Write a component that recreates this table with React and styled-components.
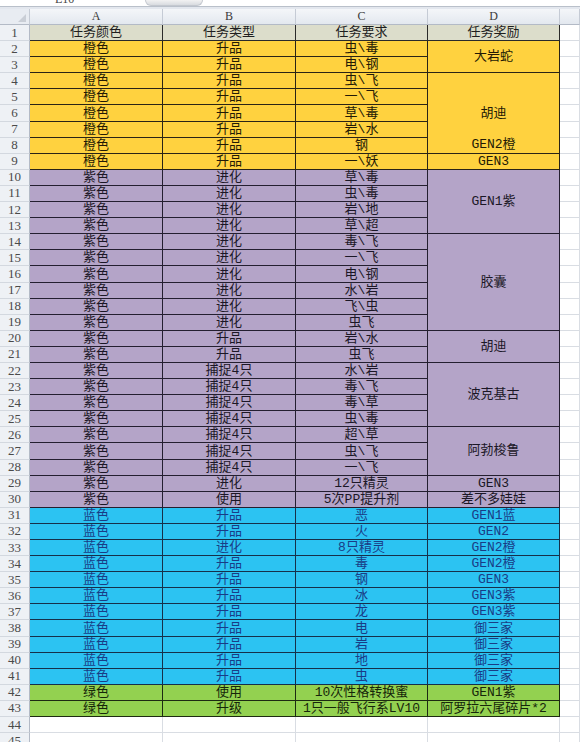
import React from 'react';
import styled, { createGlobalStyle } from 'styled-components';

const GlobalStyle = createGlobalStyle`
  html, body {
    margin: 0;
    padding: 0;
    background: #ffffff;
    overflow: hidden;
  }
  body {
    font-family: "Liberation Mono", "Noto Sans CJK SC", monospace;
  }
`;

const tones = {
  head: { bg: '#dcddcb', fg: '#1e1e1e', line: '#2a2a2a' },
  orange: { bg: '#ffd23f', fg: '#231a05', line: '#2a2416' },
  purple: { bg: '#b4a4c8', fg: '#1b1726', line: '#241f30' },
  blue: { bg: '#2cc3f2', fg: '#1a3c86', line: '#16304a' },
  green: { bg: '#93d150', fg: '#16260a', line: '#1d2a12' },
  blank: { bg: '#ffffff', fg: '#222', line: '#d9dde3' },
};

const rows = [
  ['orange', '橙色', '升品', '虫\\毒'],
  ['orange', '橙色', '升品', '电\\钢'],
  ['orange', '橙色', '升品', '虫\\飞'],
  ['orange', '橙色', '升品', '一\\飞'],
  ['orange', '橙色', '升品', '草\\毒'],
  ['orange', '橙色', '升品', '岩\\水'],
  ['orange', '橙色', '升品', '钢'],
  ['orange', '橙色', '升品', '一\\妖'],
  ['purple', '紫色', '进化', '草\\毒'],
  ['purple', '紫色', '进化', '虫\\毒'],
  ['purple', '紫色', '进化', '岩\\地'],
  ['purple', '紫色', '进化', '草\\超'],
  ['purple', '紫色', '进化', '毒\\飞'],
  ['purple', '紫色', '进化', '一\\飞'],
  ['purple', '紫色', '进化', '电\\钢'],
  ['purple', '紫色', '进化', '水\\岩'],
  ['purple', '紫色', '进化', '飞\\虫'],
  ['purple', '紫色', '进化', '虫飞'],
  ['purple', '紫色', '升品', '岩\\水'],
  ['purple', '紫色', '升品', '虫飞'],
  ['purple', '紫色', '捕捉4只', '水\\岩'],
  ['purple', '紫色', '捕捉4只', '毒\\飞'],
  ['purple', '紫色', '捕捉4只', '毒\\草'],
  ['purple', '紫色', '捕捉4只', '虫\\毒'],
  ['purple', '紫色', '捕捉4只', '超\\草'],
  ['purple', '紫色', '捕捉4只', '虫\\飞'],
  ['purple', '紫色', '捕捉4只', '一\\飞'],
  ['purple', '紫色', '进化', '12只精灵'],
  ['purple', '紫色', '使用', '5次PP提升剂'],
  ['blue', '蓝色', '升品', '恶'],
  ['blue', '蓝色', '升品', '火'],
  ['blue', '蓝色', '进化', '8只精灵'],
  ['blue', '蓝色', '升品', '毒'],
  ['blue', '蓝色', '升品', '钢'],
  ['blue', '蓝色', '升品', '冰'],
  ['blue', '蓝色', '升品', '龙'],
  ['blue', '蓝色', '升品', '电'],
  ['blue', '蓝色', '升品', '岩'],
  ['blue', '蓝色', '升品', '地'],
  ['blue', '蓝色', '升品', '虫'],
  ['green', '绿色', '使用', '10次性格转换蜜'],
  ['green', '绿色', '升级', '1只一般飞行系LV10'],
];

// column D rewards: start row, span, lines (row offset inside the merge)
const rewards = [
  { start: 2, span: 2, tone: 'orange', text: '大岩蛇' },
  { start: 4, span: 5, tone: 'orange', lines: [{ at: 3, text: '胡迪' }, { at: 5, text: 'GEN2橙' }] },
  { start: 9, span: 1, tone: 'orange', text: 'GEN3' },
  { start: 10, span: 4, tone: 'purple', text: 'GEN1紫' },
  { start: 14, span: 6, tone: 'purple', text: '胶囊' },
  { start: 20, span: 2, tone: 'purple', text: '胡迪' },
  { start: 22, span: 4, tone: 'purple', text: '波克基古' },
  { start: 26, span: 3, tone: 'purple', text: '阿勃梭鲁' },
  { start: 29, span: 1, tone: 'purple', text: 'GEN3' },
  { start: 30, span: 1, tone: 'purple', text: '差不多娃娃' },
  { start: 31, span: 1, tone: 'blue', text: 'GEN1蓝' },
  { start: 32, span: 1, tone: 'blue', text: 'GEN2' },
  { start: 33, span: 1, tone: 'blue', text: 'GEN2橙' },
  { start: 34, span: 1, tone: 'blue', text: 'GEN2橙' },
  { start: 35, span: 1, tone: 'blue', text: 'GEN3' },
  { start: 36, span: 1, tone: 'blue', text: 'GEN3紫' },
  { start: 37, span: 1, tone: 'blue', text: 'GEN3紫' },
  { start: 38, span: 1, tone: 'blue', text: '御三家' },
  { start: 39, span: 1, tone: 'blue', text: '御三家' },
  { start: 40, span: 1, tone: 'blue', text: '御三家' },
  { start: 41, span: 1, tone: 'blue', text: '御三家' },
  { start: 42, span: 1, tone: 'green', text: 'GEN1紫' },
  { start: 43, span: 1, tone: 'green', text: '阿罗拉六尾碎片*2' },
];

const TOTAL_ROWS = 45;

export default function App() {
  const body = [];

  for (let r = 1; r <= TOTAL_ROWS; r += 1) {
    const gr = r + 1;
    body.push(
      <RowNumber key={`n${r}`} $row={gr}>
        {r}
      </RowNumber>,
    );

    if (r === 1) {
      ['任务颜色', '任务类型', '任务要求', '任务奖励'].forEach((t, i) => {
        body.push(
          <Cell key={`h${i}`} $row={gr} $col={i + 2} $tone="head">
            {t}
          </Cell>,
        );
      });
    } else if (r <= 43) {
      const [tone, a, b, c] = rows[r - 2];
      [a, b, c].forEach((t, i) => {
        body.push(
          <Cell key={`c${r}-${i}`} $row={gr} $col={i + 2} $tone={tone}>
            {t}
          </Cell>,
        );
      });
    } else {
      [2, 3, 4, 5].forEach((col) => {
        body.push(<Cell key={`b${r}-${col}`} $row={gr} $col={col} $tone="blank" />);
      });
    }

    body.push(<Cell key={`e${r}`} $row={gr} $col={6} $tone="blank" />);
  }

  rewards.forEach((rw) => {
    body.push(
      <Merged key={`d${rw.start}`} $row={rw.start + 1} $span={rw.span} $tone={rw.tone}>
        {rw.lines ? (
          rw.lines.map((l) => (
            <MergedLine key={l.at} $at={l.at}>
              {l.text}
            </MergedLine>
          ))
        ) : (
          <MergedLine $at={1} $full>
            {rw.text}
          </MergedLine>
        )}
      </Merged>,
    );
  });

  return (
    <>
      <GlobalStyle />
      <Page>
        <FormulaBar>
          <NameBox>E10</NameBox>
          <FxTab />
        </FormulaBar>
        <Strip />
        <Sheet>
          <Corner>
            <svg width="8" height="8" viewBox="0 0 8 8">
              <path d="M8 0 L8 8 L0 8 Z" fill="#c9ced6" />
            </svg>
          </Corner>
          {['A', 'B', 'C', 'D', ''].map((l, i) => (
            <ColumnLetter key={l || 'E'} $col={i + 2}>
              {l}
            </ColumnLetter>
          ))}
          {body}
        </Sheet>
      </Page>
    </>
  );
}

const Page = styled.div`
  width: 580px;
  height: 742px;
  overflow: hidden;
  background: #ffffff;
`;

const FormulaBar = styled.div`
  height: 6px;
  display: flex;
  align-items: flex-end;
  border-bottom: 1px solid #b9c0ca;
  overflow: hidden;
`;

const NameBox = styled.div`
  width: 145px;
  padding-left: 55px;
  box-sizing: border-box;
  font-family: "Liberation Serif", serif;
  font-size: 12px;
  line-height: 12px;
  height: 6px;
  overflow: hidden;
  display: flex;
  align-items: flex-end;
  color: #444;
  transform: translateY(-1px);
`;

const FxTab = styled.div`
  width: 58px;
  height: 6px;
  border-radius: 0 0 6px 6px;
  background: linear-gradient(#f2f2f2, #d8dbe0);
  border: 1px solid #c4c8cf;
  border-top: none;
  box-sizing: border-box;
`;

const Strip = styled.div`
  height: 2px;
  background: #e3e7ee;
`;

const Sheet = styled.div`
  display: grid;
  grid-template-columns: 30px 133px 133px 132px 132px 20px;
  grid-template-rows: 16px repeat(${TOTAL_ROWS}, 16.1px);
`;

const Corner = styled.div`
  grid-row: 1;
  grid-column: 1;
  background: #e8ecf2;
  border-right: 1px solid #c5cbd5;
  border-bottom: 1px solid #b3bac6;
  box-sizing: border-box;
  display: flex;
  align-items: flex-end;
  justify-content: flex-end;
  padding: 0 3px 2px 0;
`;

const ColumnLetter = styled.div`
  grid-row: 1;
  grid-column: ${(p) => p.$col};
  background: linear-gradient(#f4f6f9, #e3e8ef);
  border-right: 1px solid #c5cbd5;
  border-bottom: 1px solid #b3bac6;
  box-sizing: border-box;
  display: flex;
  align-items: center;
  justify-content: center;
  font-family: "Liberation Serif", serif;
  font-size: 12px;
  color: #3a3a3a;
`;

const RowNumber = styled.div`
  grid-row: ${(p) => p.$row};
  grid-column: 1;
  background: #eef1f5;
  border-right: 1px solid #b3bac6;
  border-bottom: 1px solid #d3d8df;
  box-sizing: border-box;
  display: flex;
  align-items: center;
  justify-content: center;
  font-family: "Liberation Serif", serif;
  font-size: 13px;
  color: #4a4a4a;
`;

const Cell = styled.div`
  grid-row: ${(p) => p.$row};
  grid-column: ${(p) => p.$col};
  background: ${(p) => tones[p.$tone].bg};
  color: ${(p) => tones[p.$tone].fg};
  border-right: 1px solid ${(p) => tones[p.$tone].line};
  border-bottom: 1px solid ${(p) => tones[p.$tone].line};
  box-sizing: border-box;
  display: flex;
  align-items: flex-end;
  justify-content: center;
  font-size: 13px;
  line-height: 15px;
  white-space: nowrap;
  overflow: hidden;
`;

const Merged = styled.div`
  grid-row: ${(p) => p.$row} / span ${(p) => p.$span};
  grid-column: 5;
  background: ${(p) => tones[p.$tone].bg};
  color: ${(p) => tones[p.$tone].fg};
  border-right: 1px solid ${(p) => tones[p.$tone].line};
  border-bottom: 1px solid ${(p) => tones[p.$tone].line};
  box-sizing: border-box;
  display: grid;
  grid-template-rows: repeat(${(p) => p.$span}, 1fr);
  font-size: 13px;
  line-height: 15px;
  white-space: nowrap;
  overflow: hidden;
`;

const MergedLine = styled.div`
  grid-row: ${(p) => (p.$full ? '1 / -1' : p.$at)};
  display: flex;
  align-items: center;
  justify-content: center;
`;
